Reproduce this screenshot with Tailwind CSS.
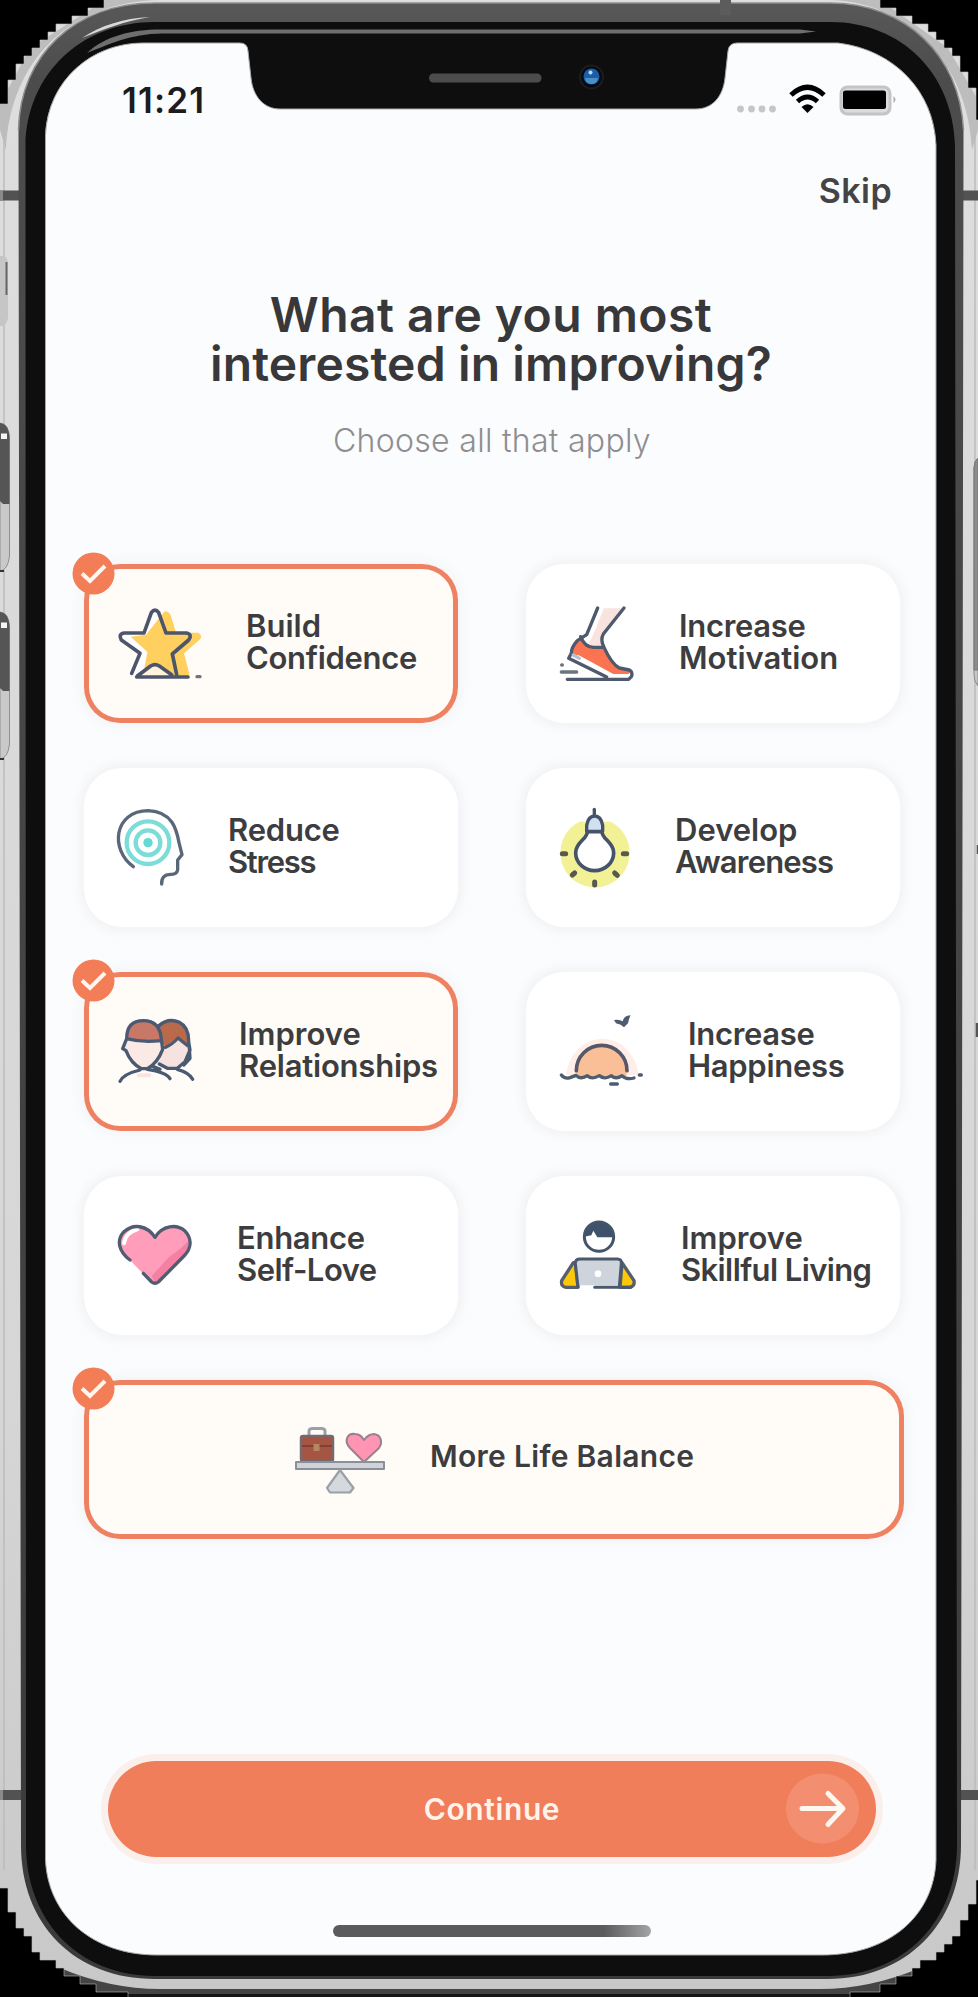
<!DOCTYPE html>
<html lang="en">
<head>
<meta charset="utf-8">
<title>Onboarding – interests</title>
<script src="https://cdn.jsdelivr.net/npm/@tailwindcss/browser@4"></script>
</head>
<body class="relative h-[1997px] w-[978px] overflow-hidden bg-[#dcdcdc] font-[Inter,sans-serif] text-[#3d3d3f]">

<!-- Device body -->
<svg class="absolute inset-0" width="978" height="1997" viewBox="0 0 978 1997" fill="none">
  <defs>
    <linearGradient id="side" x1="0" y1="0" x2="0" y2="1"><stop offset="0" stop-color="#dedede"/><stop offset=".7" stop-color="#d6d6d6"/><stop offset="1" stop-color="#c8c8c8"/></linearGradient>
    <linearGradient id="rim" x1="0" y1="0" x2="0" y2="1"><stop offset="0" stop-color="#585858"/><stop offset=".04" stop-color="#4c4c4c"/><stop offset="1" stop-color="#3a3a3a"/></linearGradient>
  </defs>
  <rect width="978" height="1997" fill="url(#side)"/>
  <path d="M0 130V104L30 48 105 0H160C70 2 10 60 6 150Z" fill="#bdbdbd"/>
  <path d="M978 130V100L948 48 880 0H830C905 2 968 60 972 150Z" fill="#bdbdbd"/>
  <path d="M4 120V1870M975 130V1870" stroke="#bcbcbc" stroke-width="1.500"/>
  <!-- antenna bands -->
  <path d="M0 195.500H22M960 195.500H978M0 1795H22M960 1795H978" stroke="#525252" stroke-width="10"/>
  <path d="M0 195.500H3M0 1795H3" stroke="#8a8a8a" stroke-width="10"/>
  <!-- buttons -->
  <path d="M0 256H4Q8 258 8 264V318Q7 324 3 326H0Z" fill="#c6c6c6"/><path d="M6.500 262V295" stroke="#666" stroke-width="2"/>
  <path d="M0 423Q9 424 9.500 438V556Q8 570 0 571Z" fill="#c9c9c9" stroke="#8f8f8f"/>
  <path d="M0 423Q9 424 9.500 438V504H3L0 501Z" fill="#555"/><path d="M1 433.500H7V439H1Z" fill="#f4f4f4"/><path d="M0 571H4" stroke="#333" stroke-width="2"/>
  <path d="M0 612Q9 613 9.500 627V744Q8 758 0 759Z" fill="#c9c9c9" stroke="#8f8f8f"/>
  <path d="M0 612Q9 613 9.500 627V691H3L0 688Z" fill="#555"/><path d="M1 622.500H7V628H1Z" fill="#f4f4f4"/><path d="M0 759H4" stroke="#333" stroke-width="2"/>
  <path d="M978 458Q974 461 974 468V674Q974 682 978 686Z" fill="#c9c9c9" stroke="#888"/>
  <path d="M978 458Q974 461 974 468V670H978Z" fill="#8c8c8c" stroke="#777"/>
  <path d="M978 845V854M977 1023V1037" stroke="#555" stroke-width="2.500"/>
  <!-- lower edge -->
  <path d="M60 1968Q110 1989 160 1989H820Q870 1989 920 1968V1997H60Z" fill="#454545"/>
  <path d="M128 1995.500H850" stroke="#161616" stroke-width="3"/>
  <!-- dark rim and bezel -->
  <path d="M18.500 130C20 55 75 3 155 3H830C905 3 960 55 963.500 130L961 1845C961 1925 905 1979 828 1979H155C75 1979 21 1925 21 1845Z" fill="url(#rim)"/>
  <path d="M18.500 130C20 55 75 3 155 3H830C905 3 960 55 963.500 130" stroke="#8f8f8f" stroke-width="1.500"/>
  <path d="M25.500 145C27 75 80 22 155 22H830C903 22 953 75 955 145L957 1845C957 1920 905 1976 828 1976H155C78 1976 26 1920 26 1845Z" fill="#0e0e0e"/>
  <path d="M87 53C105 36 132 29.500 160 29.500H800L816 31.500 800 33.500H162C130 34 110 44 87 53Z" fill="#6e6e6e"/>
  <path d="M82 38C100 26 123 18 150 17C125 21 104 29 82 38Z" fill="#d8d8d8"/>
  <path d="M720 0H731V15H720Z" fill="#5c5c5c"/>
  <!-- screen glass -->
  <path d="M45.500 135C48 80 92 43 143 43H240Q247.500 43 248 51L251 78C253 97 264 109 280 109H696C712 109 723 97 725 78L728 51Q729 43 737 43H838C895 50 934 92 936 145V1860C934 1915 890 1955 822 1955H157C92 1955 48 1915 45.500 1860Z" fill="#fbfcfe" stroke="#a8a8a8" stroke-width="1"/>
  <!-- speaker and camera -->
  <rect x="429" y="73.500" width="112.500" height="9" rx="4.500" fill="#4c4c4c"/>
  <circle cx="591.500" cy="77" r="12.500" fill="#1d1d1f"/><circle cx="591.500" cy="77" r="10.500" fill="#050a12"/>
  <circle cx="591.500" cy="76.500" r="8" fill="#1a5eaa"/><path d="M585 78H598Q597 84 591.500 84T585 78Z" fill="#4a90c2"/><circle cx="590.500" cy="72.500" r="2" fill="#b5dcf8"/>
  <!-- stepped corners -->
  <g fill="#000" stroke="#b9b9b9" stroke-width=".6">
    <path d="M-2-2H104V8H88V16H72V24H56V32H48V40H40V48H32V56H24V64H16V80H8V104H-2Z"/>
    <path d="M980-2H880V8H896V16H912V24H928V32H936V40H944V48H952V56H960V72H968V88H976V120H980Z"/>
    <path d="M-2 1888H8V1912H16V1928H24V1936H32V1952H40V1960H56V1968H64V1976H80V1984H96V1992H128V1999H-2Z"/>
    <path d="M980 1880H976V1904H968V1920H960V1936H952V1944H944V1952H936V1960H920V1968H912V1976H896V1984H880V1992H850V1999H980Z"/>
  </g>
</svg>

<main class="relative flex h-full flex-col pl-[84px] pr-[73px] pt-[82px]">
  <!-- Status bar -->
  <header class="flex h-[36px] items-start justify-between pl-[38px] pr-[7px]">
    <time class="text-[35px] font-semibold leading-[36px] tracking-[1.2px] text-[#1c1c1e]">11:21</time>
    <svg width="162" height="36" viewBox="736 82 162 36" fill="none">
      <g fill="#c6c6c8"><circle cx="740.500" cy="109" r="3.400"/><circle cx="751.500" cy="109" r="3.400"/><circle cx="762" cy="109" r="3.400"/><circle cx="772.500" cy="109" r="3.400"/></g>
      <path d="M791 95Q807.500 79.500 824 95M797.500 101.500Q807.500 92.500 817.500 101.500" stroke="#000" stroke-width="5"/>
      <path d="M801.500 107Q807.500 101.500 813.500 107L807.500 113Z" fill="#000"/>
      <rect x="841" y="87" width="49" height="27" rx="6.500" fill="#dcdcde" stroke="#c4c4c6" stroke-width="3"/>
      <rect x="843" y="90.500" width="43" height="18.500" rx="2.500" fill="#000"/>
      <path d="M893.500 96Q897.500 99.500 893.500 103Z" fill="#aaa"/>
    </svg>
  </header>

  <button class="mt-[56px] self-end pr-[13px] text-[34px] font-semibold leading-[34px] tracking-[0.4px] text-[#444446]">Skip</button>

  <h1 class="mt-[82px] flex flex-col items-center pr-[7px] text-[48px] font-semibold leading-[49px] text-[#38383a]">
    <span class="whitespace-nowrap tracking-[0.45px]">What are you most</span>
    <span class="whitespace-nowrap tracking-[0.13px]">interested in improving?</span>
  </h1>
  <p class="mt-[37px] pr-[5px] text-center text-[32px] font-light leading-[32px] tracking-[0.3px] text-[#8e8e90]">Choose all that apply</p>

  <!-- Options -->
  <section class="mt-[107px] grid w-[816px] grid-cols-[374px_374px] gap-x-[68px] gap-y-[45px] text-[31px] font-semibold leading-[32px]">

    <button class="relative flex h-[159px] items-center rounded-[36px] bg-[#fffcf8] text-left shadow-[inset_0_0_0_5px_#ef8163,0_0_12px_4px_#f3f4f6]">
      <svg class="absolute -left-[12px] -top-[12px]" width="43" height="43" viewBox="0 0 43 43" fill="none"><circle cx="21.500" cy="21.500" r="21" fill="#f27d56"/><path d="M10 21.500L18 29 33 14" stroke="#fff6ef" stroke-width="4"/></svg>
      <svg class="shrink-0" width="162" height="159" viewBox="72 72 486 477" fill="none" stroke-linecap="round" stroke-linejoin="round">
        <path d="M285 215L320 278 385 285 337 340 350 408H230L215 400 240 340 182 292 258 278Z" fill="#fff"/>
        <path d="M314 214Q328 214 333 228L348 278H415Q430 288 418 300L372 340 388 402Q388 410 376 410L345 408 285 375 250 400 262 336 212 290 258 284Z" fill="#ffd05f"/>
        <path d="M232 406L285 376 335 406Z" fill="#fff3dc"/>
        <path d="M215 400L240 340 184 300Q174 282 192 279H252L274 218Q285 203 296 218L318 279H380Q398 284 386 300L337 342 350 404M232 408L272 378Q285 370 298 378L335 404M230 411H384" stroke="#4c556b" stroke-width="11"/>
        <path d="M411 410H420" stroke="#6d7484" stroke-width="10"/>
      </svg>
      <span class="flex flex-col pb-[4px]"><span>Build</span><span class="tracking-[-0.3px]">Confidence</span></span>
    </button>

    <button class="flex h-[159px] items-center rounded-[38px] bg-white text-left shadow-[0_0_10px_5px_#f2f3f5]">
      <svg class="shrink-0" width="153" height="159" viewBox="48 72 459 477" fill="none" stroke-linecap="round" stroke-linejoin="round">
        <path d="M275 205H335L278 280 272 320H232L258 265Z" fill="#f8e3df"/><path d="M262 205L228 285 232 318 255 270 282 205Z" fill="#fff"/>
        <path d="M212 292Q190 310 184 340L290 402H356L362 390 325 382 276 322Q240 330 222 312Z" fill="#fb7452"/>
        <path d="M178 350L205 345 310 402H360L355 415H290Z" fill="#fff"/>
        <path d="M263 204L230 284 202 302Q184 322 184 340L176 355 290 411M342 204L280 282Q270 300 282 322 305 372 328 384L358 390Q370 398 364 410L356 418H172M212 290Q224 322 250 322H278" stroke="#4e596e" stroke-width="10"/>
        <path d="M190 345L208 355" stroke="#b4c2d0" stroke-width="10"/>
        <path d="M154 396H200M155 375H157" stroke="#6b7380" stroke-width="10"/>
      </svg>
      <span class="flex flex-col pb-[4px]"><span class="tracking-[-0.3px]">Increase</span><span>Motivation</span></span>
    </button>

    <button class="flex h-[159px] items-center rounded-[38px] bg-white text-left shadow-[0_0_10px_5px_#f2f3f5]">
      <svg class="shrink-0" width="144" height="159" viewBox="72 684 432 477" fill="none" stroke-linecap="round" stroke-linejoin="round">
        <path d="M220 980C150 930 160 813 265 812C338 815 350 870 357 908L366 944 353 960V990Q350 1003 335 1003C312 1002 304 1014 305 1032" stroke="#5a6779" stroke-width="10"/>
        <g stroke="#7bdcd8" stroke-width="13"><circle cx="264" cy="908" r="64"/><circle cx="264" cy="908" r="37"/></g><circle cx="264" cy="908" r="14" fill="#67d8d2"/>
      </svg>
      <span class="flex flex-col pb-[4px]"><span class="tracking-[-0.2px]">Reduce</span><span class="tracking-[-1.3px]">Stress</span></span>
    </button>

    <button class="flex h-[159px] items-center rounded-[38px] bg-white text-left shadow-[0_0_10px_5px_#f2f3f5]">
      <svg class="shrink-0" width="149" height="159" viewBox="48 684 447 477" fill="none" stroke-linecap="round" stroke-linejoin="round">
        <path d="M208 845A104 104 0 1 0 302 845Z" fill="#f3f196"/><path d="M208 845H302L285 875H225Z" fill="#f3f196"/>
        <path d="M232 875C232 898 197 906 197 938A57 54 0 0 0 311 938C311 906 276 898 276 875Z" fill="#fff" stroke="#46536a" stroke-width="11"/>
        <path d="M230 874V856Q235 828 254 828T278 856V874Z" fill="#cfe0ee" stroke="#46536a" stroke-width="10"/>
        <path d="M253 808V826" stroke="#46536a" stroke-width="10"/>
        <path d="M157 941H167M340 941H350M187 1005L194 999M314 999L322 1006M254 1026V1035" stroke="#57594f" stroke-width="15"/>
      </svg>
      <span class="flex flex-col pb-[4px]"><span>Develop</span><span class="tracking-[-0.8px]">Awareness</span></span>
    </button>

    <button class="relative flex h-[159px] items-center rounded-[36px] bg-[#fffcf8] text-left shadow-[inset_0_0_0_5px_#ef8163,0_0_12px_4px_#f3f4f6]">
      <svg class="absolute -left-[12px] -top-[13px]" width="43" height="43" viewBox="0 0 43 43" fill="none"><circle cx="21.500" cy="21.500" r="21" fill="#f27d56"/><path d="M10 21.500L18 29 33 14" stroke="#fff6ef" stroke-width="4"/></svg>
      <svg class="shrink-0" width="155" height="159" viewBox="72 66 465 477" fill="none" stroke-linecap="round" stroke-linejoin="round">
        <path d="M300 275L350 262 384 285Q382 330 350 355H320L290 340Z" fill="#f6e2de"/>
        <path d="M290 225Q325 200 360 218 388 235 386 285L352 262 318 290 300 275Z" fill="#b96a4a"/>
        <path d="M296 228Q325 202 358 217 387 232 386 275L390 300 375 335 352 355H322L298 342M384 288L354 264Q335 285 316 292M388 295L390 325 372 345" stroke="#4a5a72" stroke-width="10"/>
        <path d="M198 270H305Q305 330 268 356H240Q200 330 194 295Z" fill="#fbe9e5"/>
        <path d="M198 266Q200 212 250 212 300 212 304 266L285 275Q235 275 198 266Z" fill="#c77866"/>
        <path d="M200 266Q200 212 250 212 300 212 304 268L308 298Q292 340 262 356H244Q212 340 198 302L188 296 200 266Q245 278 302 272" stroke="#4a5a72" stroke-width="10"/>
        <path d="M180 394Q190 372 240 360M262 358Q318 366 330 386M352 358Q388 368 398 388M280 350L300 358" stroke="#4a5a72" stroke-width="10"/>
        <path d="M236 376H268" stroke="#fbe3df" stroke-width="12"/>
      </svg>
      <span class="flex flex-col pb-[4px]"><span>Improve</span><span class="tracking-[-0.2px]">Relationships</span></span>
    </button>

    <button class="flex h-[159px] items-center rounded-[38px] bg-white text-left shadow-[0_0_10px_5px_#f2f3f5]">
      <svg class="shrink-0" width="162" height="159" viewBox="48 66 486 477" fill="none" stroke-linecap="round" stroke-linejoin="round">
        <path d="M168 375A110 126 0 0 1 386 375Z" fill="#ffede7"/>
        <path d="M198 378A76 92 0 0 1 350 378Z" fill="#fbbf98"/>
        <path d="M199 362A76 76 0 0 1 351 362" stroke="#56586a" stroke-width="11"/>
        <path d="M154 375Q164 388 180 383L198 376Q212 390 232 377 246 390 268 377 284 390 304 377 318 390 336 377 350 390 372 384M388 375H394M302 402H322" stroke="#4e5c70" stroke-width="10"/>
        <path d="M312 210Q330 208 338 214 342 196 362 196 356 206 354 220L342 232 332 224 318 220Z" fill="#4e5c70"/>
      </svg>
      <span class="flex flex-col pb-[4px] tracking-[-0.3px]"><span>Increase</span><span>Happiness</span></span>
    </button>

    <button class="flex h-[159px] items-center rounded-[38px] bg-white text-left shadow-[0_0_10px_5px_#f2f3f5]">
      <svg class="shrink-0" width="153" height="159" viewBox="72 678 459 477" fill="none" stroke-linecap="round" stroke-linejoin="round">
        <path d="M285 862C262 825 215 820 192 848 170 880 180 905 212 932L250 972 285 1002 372 915C400 890 396 840 360 832 325 824 302 840 285 862Z" fill="#ff9dbb"/>
        <path d="M385 872Q360 900 330 918L275 978 285 998 372 912Q388 895 385 872Z" fill="#f580a4"/>
        <path d="M192 880Q196 848 232 838" stroke="#fff" stroke-width="12"/>
        <path d="M210 930C176 905 168 870 192 845 220 820 260 825 285 862 308 825 350 822 374 842 398 868 394 895 372 918L295 996Q285 1004 275 996L250 970" stroke="#505c70" stroke-width="10"/>
      </svg>
      <span class="flex flex-col pb-[4px]"><span class="tracking-[-0.3px]">Enhance</span><span class="tracking-[-0.5px]">Self-Love</span></span>
    </button>

    <button class="flex h-[159px] items-center rounded-[38px] bg-white text-left shadow-[0_0_10px_5px_#f2f3f5]">
      <svg class="shrink-0" width="155" height="159" viewBox="48 678 465 477" fill="none" stroke-linecap="round" stroke-linejoin="round">
        <circle cx="267" cy="860" r="44" fill="#fff"/>
        <path d="M223 860A44 44 0 0 1 311 862H262L250 842 244 856Z" fill="#3f526c"/>
        <circle cx="267" cy="860" r="44" stroke="#43546b" stroke-width="9"/>
        <path d="M190 938L155 992Q152 1010 168 1012H204L196 938ZM336 938L372 992Q375 1008 360 1012H330Z" fill="#fdc80c" stroke="#56606c" stroke-width="10"/>
        <path d="M204 1006L196 940Q196 927 210 927H322Q335 927 334 940L328 1006Z" fill="#ced4dc"/>
        <path d="M204 1010L196 940Q196 927 210 927H322Q335 927 334 940L328 1010M254 1012H362" stroke="#4b596d" stroke-width="9"/>
        <circle cx="264" cy="971" r="10" fill="#fff"/>
      </svg>
      <span class="flex flex-col pb-[4px]"><span>Improve</span><span class="whitespace-nowrap tracking-[-0.6px]">Skillful Living</span></span>
    </button>

    <button class="relative col-span-2 flex h-[159px] w-[820px] items-center rounded-[36px] bg-[#fffcf8] text-left shadow-[inset_0_0_0_5px_#ef8163,0_0_12px_4px_#f3f4f6]">
      <svg class="absolute -left-[12px] -top-[13px]" width="43" height="43" viewBox="0 0 43 43" fill="none"><circle cx="21.500" cy="21.500" r="21" fill="#f27d56"/><path d="M10 21.500L18 29 33 14" stroke="#fff6ef" stroke-width="4"/></svg>
      <svg class="shrink-0" width="346" height="159" viewBox="84 1380 346 159" fill="none" stroke-linejoin="round">
        <path d="M309 1436V1431Q309 1428.500 313 1428.500H321Q325 1428.500 325 1431V1436" stroke="#9aa0a8" stroke-width="3"/>
        <rect x="301" y="1436" width="32" height="25" rx="2" fill="#a65543" stroke="#77696c" stroke-width="2.500"/>
        <path d="M302 1446H332" stroke="#7d4136" stroke-width="2"/><rect x="313.500" y="1444" width="6" height="7" fill="#b58663"/>
        <path d="M364 1462L350 1448C343 1440 348 1433 355 1434 360 1434 362 1437 364 1440 367 1436 370 1434 374 1434 381 1435 383 1442 379 1448Z" fill="#ff94b3" stroke="#99818f" stroke-width="2"/>
        <rect x="296" y="1462" width="88" height="7" fill="#cfd2d8" stroke="#8a9099" stroke-width="2"/>
        <path d="M340 1470L327 1488 330 1492.500H350L353.500 1488Z" fill="#d5d8dd" stroke="#9a9fa8" stroke-width="2.200"/>
      </svg>
      <span class="pb-[7px] text-[30px] tracking-[0.3px]">More Life Balance</span>
    </button>
  </section>

  <!-- Primary action -->
  <button class="relative ml-[24px] mt-[222px] flex h-[96px] w-[768px] shrink-0 items-center justify-center rounded-full bg-[#f17e5a] text-[30px] font-semibold tracking-[0.6px] text-[#fff3ec] shadow-[0_0_0_7px_#fbefec]">Continue
    <svg class="absolute right-[17px] top-[12px]" width="73" height="71" viewBox="0 0 73 71" fill="none"><ellipse cx="36.500" cy="35.500" rx="36.500" ry="35" fill="#f38f70"/><path d="M16 35.500H56M42 20.500L57 35.500 42 51.500" stroke="#fff7f0" stroke-width="5" stroke-linecap="round" stroke-linejoin="round"/></svg>
  </button>

  <div class="ml-[249px] mt-[68px] h-[12px] w-[318px] shrink-0 rounded-full bg-linear-to-r from-[#5b5b5d] from-85% to-[#a5a5a7]"></div>
</main>
</body>
</html>
